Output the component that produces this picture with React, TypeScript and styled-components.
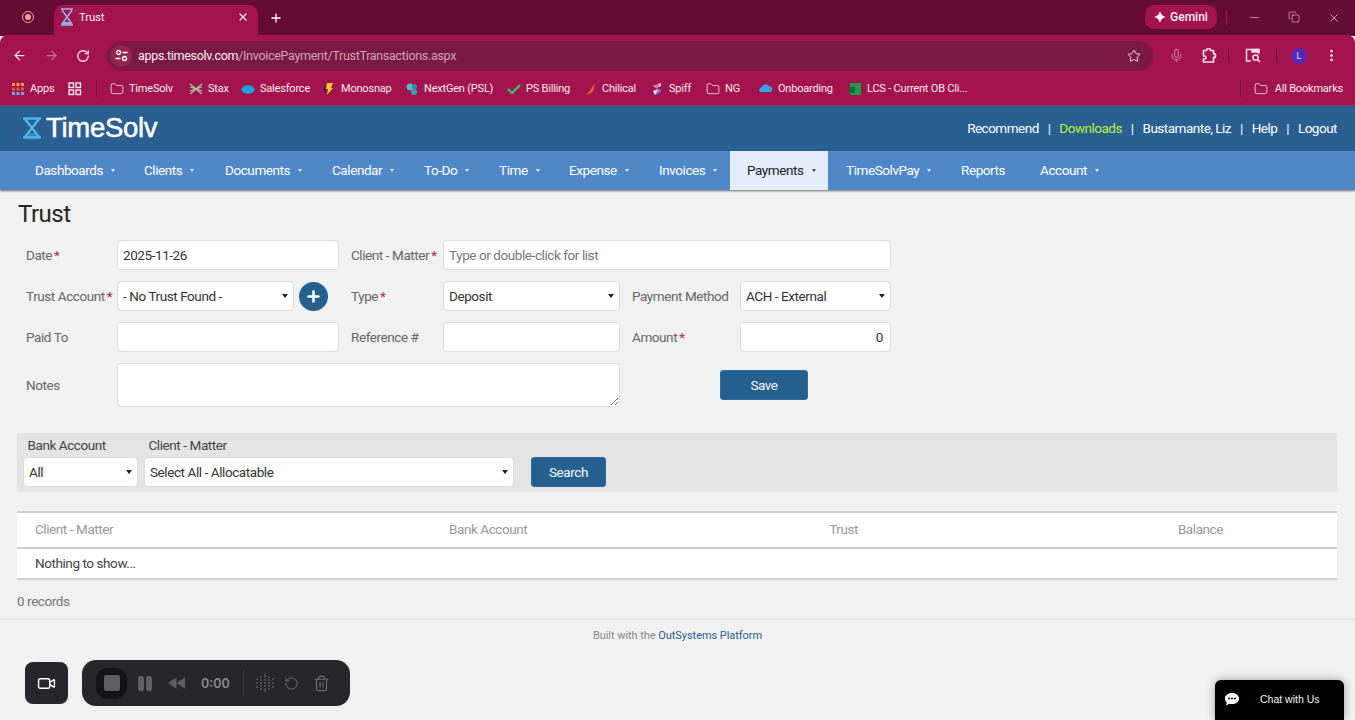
import React from "react";
import styled, { createGlobalStyle } from "styled-components";
import { ArrowLeft, ArrowRight, RotateCw, Star, Mic, X, Plus, Minus, Copy, EllipsisVertical, Folder, Video, RotateCcw, Trash2 } from "lucide-react";

const Global = createGlobalStyle`
  html, body { margin: 0; padding: 0; background: #f1f1f1; }
  * { box-sizing: border-box; }
  body { font-family: Roboto, "Liberation Sans", sans-serif; font-size: 13.5px; letter-spacing: -0.42px; color: #333; overflow: hidden; }
`;

const Page = styled.div`position: relative; width: 1355px; height: 720px; overflow: hidden; display: flex; flex-direction: column;`;

/* Browser chrome */
const TabStrip = styled.div`height: 36px; background: #650c35; display: flex; align-items: flex-end; padding-left: 20px; flex: none; letter-spacing: 0;`;
const RecordDot = styled.div`
  width: 12px; height: 12px; border-radius: 50%; border: 1.5px solid #f3a5a5; margin-bottom: 13px; margin-right: 20px;
  display: flex; align-items: center; justify-content: center; margin-left: 2px;
  &::before { content: ""; width: 6px; height: 6px; border-radius: 50%; background: #f4a0a0; }
`;
const Tab = styled.div`
  width: 204px; height: 31px; background: #a3134d; border-radius: 9px 9px 0 0; display: flex; align-items: center; padding: 0 9px 7px 5px;
  color: #f6e9ee; font-size: 11.5px; letter-spacing: -0.2px;
`;
const TabTitle = styled.span`flex: 1; margin-left: 4px;`;
const NewTab = styled.div`color: #fff; margin: 0 0 11px 11px; display: flex;`;
const StripSpacer = styled.div`flex: 1;`;
const Gemini = styled.div`
  width: 72px; height: 24px; background: #a3134d; border-radius: 9px; margin-bottom: 7px; color: #fbeef3; font-size: 12px;
  display: flex; align-items: center; justify-content: center; gap: 4px; font-weight: 500;
`;
const StripSep = styled.div`width: 1px; height: 14px; background: #a3134d; margin: 0 0 11px 9px;`;
const WinButtons = styled.div`display: flex; margin-bottom: 11px; color: #e6d3db; width: 128px; padding-left: 21px; gap: 27px;`;

const Toolbar = styled.div`height: 37px; background: #a3134d; border-radius: 8px 8px 0 0; display: flex; align-items: center; flex: none; padding: 4px 0 0 12px; margin-top: -1px; color: #f3dfe7; letter-spacing: 0;`;
const NavIcon = styled.div<{ $dim?: boolean }>`width: 32px; display: flex; opacity: ${p => (p.$dim ? 0.45 : 1)};`;
const Omnibox = styled.div`
  width: 1046px; height: 30px; margin-left: -1px; background: #7a1a43; border-radius: 15px; display: flex; align-items: center; padding: 0 12px 0 3px; font-size: 12.5px; letter-spacing: -0.3px;
`;
const SiteInfo = styled.div`width: 22px; height: 22px; border-radius: 50%; background: #92264f; display: flex; align-items: center; justify-content: center; margin-right: 6px;`;
const UrlHost = styled.span`color: #fbeff4;`;
const UrlPath = styled.span`color: #cfa3b6;`;
const OmniSpacer = styled.div`flex: 1;`;
const ToolIcons = styled.div`display: flex; align-items: center; padding-left: 16px; width: 202px;`;
const ToolIcon = styled.div<{ $w: number; $dim?: boolean }>`width: ${p => p.$w}px; display: flex; opacity: ${p => (p.$dim ? 0.45 : 1)};`;
const ToolSep = styled.div<{ $w: number }>`width: 1px; height: 15px; background: #7d1440; margin-right: ${p => p.$w}px;`;
const Avatar = styled.div`width: 16px; height: 16px; border-radius: 50%; background: #5a25b0; color: #e9dcf5; font-size: 9px; display: flex; align-items: center; justify-content: center; margin-right: 17px;`;

const Bookmarks = styled.div`height: 33px; background: #a3134d; display: flex; align-items: center; padding: 0 12px 0 11px; font-size: 11px; letter-spacing: -0.2px; color: #f8ebf0; flex: none;`;
const Bookmark = styled.div<{ $w: number }>`width: ${p => p.$w}px; display: flex; align-items: center; gap: 5px; white-space: nowrap; flex: none;`;
const AllBookmarks = styled(Bookmark)`justify-content: flex-end; gap: 7px;`;
const BmIcon = styled.svg`width: 14px; height: 14px; flex: none;`;
const BmSep = styled.div`width: 1px; height: 16px; background: #7d1440; flex: none;`;
const BmSpacer = styled.div`flex: 1;`;

/* App header */
const AppHeader = styled.header`height: 46px; background: #2a6091; border-top: 1px solid #8f3a6f; display: flex; align-items: center; justify-content: space-between; padding: 0 18px 2px 22px; flex: none;`;
const Logo = styled.div`display: flex; align-items: center; gap: 4px; color: #fff; font-family: "Liberation Sans", Arial, sans-serif; font-size: 27.5px; letter-spacing: -0.3px; font-weight: 400; -webkit-text-stroke: 0.5px #fff;`;
const TopLinks = styled.nav`display: flex; align-items: center; color: #fff; letter-spacing: -0.5px;`;
const TopLink = styled.span<{ $green?: boolean }>`color: ${p => (p.$green ? "#b9f03c" : "#fff")};`;
const TopSep = styled.span`margin: 0 8.9px;`;

const MainNav = styled.nav`height: 39px; background: #4f87c9; box-shadow: 0 1px 2px rgba(0,0,0,.55); display: flex; padding-left: 17px; flex: none; position: relative; color: #fff;`;
const NavItem = styled.div<{ $active?: boolean; $w: number }>`
  width: ${p => p.$w}px; display: flex; align-items: center; padding: 0 0 2px ${p => (p.$active ? 17 : 18)}px; gap: 8px; flex: none;
  background: ${p => (p.$active ? "#e4eefa" : "transparent")}; color: ${p => (p.$active ? "#222" : "#fff")};
`;
const NavCaret = styled.span<{ $dark?: boolean }>`width: 0; height: 0; margin-top: 2px; opacity: .85; border-left: 2.5px solid transparent; border-right: 2.5px solid transparent; border-top: 3px solid ${p => (p.$dark ? "#222" : "#fff")};`;

/* Form */
const Content = styled.main`padding: 10px 18px 0 17px; flex: none;`;
const Title = styled.h1`margin: 0 0 12px 1px; font-size: 24px; font-weight: 400; line-height: 28px; letter-spacing: -0.5px; color: #252525;`;
const FormGrid = styled.div`
  display: grid; width: 874px; margin-left: 9px;
  grid-template-columns: 91px 222px 12px 92px 177px 12px 108px 151px;
  grid-template-rows: 30px 30px 30px 44px; row-gap: 11px; align-items: center;
`;
const Label = styled.label<{ $col: number }>`grid-column: ${p => p.$col}; color: #666; white-space: nowrap;`;
const Req = styled.span`color: #b3262e; margin-left: 2px;`;
const Input = styled.input<{ $span?: number; $right?: boolean }>`
  grid-column: ${p => (p.$span ? `span ${p.$span}` : "auto")}; width: 100%; height: 30px; border: 1px solid #dcdcdc; border-radius: 4px; background: #fff;
  padding: 0 5px; font: inherit; letter-spacing: inherit; color: #333; text-align: ${p => (p.$right ? "right" : "left")}; outline: none;
  &::placeholder { color: #777; opacity: 1; }
  ${p => p.$right && "padding-right: 7px;"}
`;
const Select = styled.div<{ $w?: number }>`
  position: relative; height: 30px; width: ${p => (p.$w ? `${p.$w}px` : "100%")}; flex: none; border: 1px solid #dcdcdc; border-radius: 4px; background: #fff;
  display: flex; align-items: center; padding-left: 5px; color: #333;
  &::after { content: ""; position: absolute; right: 5px; top: 12px; width: 0; height: 0; border-left: 3.5px solid transparent; border-right: 3.5px solid transparent; border-top: 4px solid #222; }
`;
const TrustField = styled.div`display: flex; align-items: center; gap: 5px;`;
const AddCircle = styled.div`width: 29px; height: 29px; border-radius: 50%; background: #25608f; display: flex; align-items: center; justify-content: center; color: #fff;`;
const GapCell = styled.div`grid-column: span 1;`;
const Notes = styled.textarea`grid-column: 2 / span 4; width: 100%; height: 44px; border: 1px solid #dcdcdc; border-radius: 4px; background: #fff; display: block; resize: both; outline: none;`;
const SaveCell = styled.div`grid-column: 7 / span 2; padding-left: 88px;`;
const Button = styled.button<{ $w: number }>`
  width: ${p => p.$w}px; height: 30px; border: 1px solid #2f6da3; border-radius: 3px; background: #25608f; color: #f4f8fb; font: inherit; letter-spacing: inherit; padding: 0; display: block;
`;

const Filter = styled.section`margin-top: 26px; height: 59px; background: #e4e4e4; border-radius: 2px; padding: 5px 6px; display: flex; align-items: flex-end; gap: 6px;`;
const FilterField = styled.div<{ $w: number }>`width: ${p => p.$w}px; display: flex; flex-direction: column; height: 49px; justify-content: space-between; color: #444;`;
const FilterLabel = styled.span`padding-left: 4.5px; line-height: 14px;`;
const SearchBtn = styled(Button)`margin-left: 11px;`;

const Table = styled.section`margin-top: 19px; background: #fff; border-top: 2px solid #cfcfcf; border-bottom: 2px solid #cfcfcf;`;
const HeadRow = styled.div`display: grid; grid-template-columns: 414px 251px 158px 365px; padding: 0 0 3px 18px; height: 36px; align-items: center; color: #999; border-bottom: 2px solid #cfcfcf;`;
const HeadCell = styled.div<{ $right?: boolean }>`text-align: ${p => (p.$right ? "right" : "left")};`;
const EmptyRow = styled.div`height: 29px; padding: 0 0 2px 18px; display: flex; align-items: center; color: #444;`;
const Records = styled.div`margin-top: 13px; color: #777; height: 15px; line-height: 16px;`;

const Footer = styled.footer`margin-top: 10px; border-top: 2px solid #e3e3e3; padding-top: 9px; text-align: center; font-size: 11px; letter-spacing: -0.05px; color: #888; flex: none;`;
const FooterLink = styled.span`color: #2a6091;`;

/* Overlays */
const CamBtn = styled.div`position: absolute; left: 25px; top: 662px; width: 43px; height: 42px; border-radius: 8px; background: #26262b; color: #fff; display: flex; align-items: center; justify-content: center;`;
const RecBar = styled.div`position: absolute; left: 82px; top: 660px; width: 268px; height: 46px; border-radius: 14px; background: #26262b; display: flex; align-items: center; padding-left: 14px; color: #6e6e73;`;
const StopWrap = styled.div`width: 31px; height: 31px; border-radius: 12px; background: #141418; display: flex; align-items: center; justify-content: center; margin-right: 11px;`;
const StopSq = styled.div`width: 16px; height: 16px; border-radius: 2px; background: #5f5f63;`;
const PauseIcon = styled.div`display: flex; gap: 2px; margin-right: 16px; &::before, &::after { content: ""; width: 6px; height: 15px; border-radius: 2px; background: #5f5f63; }`;
const Timer = styled.span`color: #8a8a8e; font-family: Inter, sans-serif; font-weight: 600; font-size: 12.5px; letter-spacing: 0; width: 28px; margin: 0 14px 0 16px; white-space: nowrap;`;
const BarSep = styled.div`width: 1px; height: 26px; background: #3a3a40; margin-right: 12px;`;
const BarIcon = styled.div<{ $w: number }>`width: ${p => p.$w}px; display: flex;`;
const Chat = styled.div`position: absolute; left: 1215px; top: 680px; width: 129px; height: 40px; background: #000; border-radius: 6px 6px 0 0; box-shadow: 0 0 8px rgba(0,0,0,.35); color: #f4f4f4; display: flex; align-items: center; padding: 0 0 2px 10px; font-family: "Liberation Sans", Arial, sans-serif; font-size: 10.5px; letter-spacing: 0;`;
const ChatText = styled.span`margin-left: 21px;`;

const FolderIcon = () => <Folder size={14} strokeWidth={1.4} color="#f6e6ec" />;

const bookmarks: { w: number; label: string; icon: React.ReactNode }[] = [
  { w: 79, label: "TimeSolv", icon: <FolderIcon /> },
  { w: 52, label: "Stax", icon: <BmIcon viewBox="0 0 14 14"><path d="M1 2l6 5 6-5M1 12l6-5 6 5M1 5l12 4M1 9l12-4" stroke="#a7c9a0" strokeWidth="1.3" fill="none" /></BmIcon> },
  { w: 81, label: "Salesforce", icon: <BmIcon viewBox="0 0 14 14"><ellipse cx="7" cy="7.500" rx="6.500" ry="4.200" fill="#19a1e0" /></BmIcon> },
  { w: 83, label: "Monosnap", icon: <BmIcon viewBox="0 0 14 14"><path d="M5 1h6L9 6h2l-6 7 1-6H4z" fill="#f3c91f" /><path d="M3 3L2 8l2 3z" fill="#1c1c3a" /></BmIcon> },
  { w: 102, label: "NextGen (PSL)", icon: <BmIcon viewBox="0 0 14 14"><circle cx="5" cy="5" r="3.400" fill="#5bb3c9" /><circle cx="9.500" cy="4.500" r="2.600" fill="#2f8fae" /><circle cx="9" cy="10" r="3" fill="#3f9fb8" /></BmIcon> },
  { w: 76, label: "PS Billing", icon: <BmIcon viewBox="0 0 14 14"><path d="M1 7l4 4 8-8" stroke="#3bbf6a" strokeWidth="2.400" fill="none" /></BmIcon> },
  { w: 67, label: "Chilical", icon: <BmIcon viewBox="0 0 14 14"><path d="M2 13C6 11 8 7 11 2c1 4-1 9-5 10z" fill="#ef5a24" /></BmIcon> },
  { w: 56, label: "Spiff", icon: <BmIcon viewBox="0 0 14 14"><path d="M11 1L3 4l5 3-5 2 2 4 6-4-5-3 5-2z" fill="#e7e3ff" /><path d="M11 1L3 4l4 2z" fill="#f2708f" /><path d="M5 13l6-4-3-2z" fill="#5f8df0" /></BmIcon> },
  { w: 53, label: "NG", icon: <FolderIcon /> },
  { w: 89, label: "Onboarding", icon: <BmIcon viewBox="0 0 14 14"><path d="M1 10a3 3 0 012-5 4 4 0 017-1 3.400 3.400 0 012 6z" fill="#3aa0ea" /></BmIcon> },
  { w: 130, label: "LCS - Current OB Cli...", icon: <BmIcon viewBox="0 0 14 14"><rect x="2" y="1" width="11" height="12" rx="1" fill="#1f9a4f" /><rect x="1" y="5" width="6" height="6" fill="#0f6b37" /></BmIcon> },
];

const navItems: { label: string; w: number; caret?: boolean; active?: boolean }[] = [
  { label: "Dashboards", w: 109, caret: true },
  { label: "Clients", w: 81, caret: true },
  { label: "Documents", w: 107, caret: true },
  { label: "Calendar", w: 92, caret: true },
  { label: "To-Do", w: 75, caret: true },
  { label: "Time", w: 70, caret: true },
  { label: "Expense", w: 90, caret: true },
  { label: "Invoices", w: 89, caret: true },
  { label: "Payments", w: 98, caret: true, active: true },
  { label: "TimeSolvPay", w: 115, caret: true },
  { label: "Reports", w: 79 },
  { label: "Account", w: 90, caret: true },
];

const Hourglass = () => (
  <svg width="20" height="22" viewBox="0 0 20 22" fill="none" stroke="#4fb4ea" strokeWidth="2.400">
    <path d="M1 1.500h18M1 20.500h18M3 2l14 18M17 2L3 20" />
    <path d="M6.500 16h7l2.500 4H4z" fill="#4fb4ea" fillOpacity="0.45" stroke="none" />
  </svg>
);

export default function App() {
  return (
    <Page>
      <Global />
      <TabStrip>
        <RecordDot />
        <Tab>
          <svg width="16" height="18" viewBox="0 0 16 18" fill="none" stroke="#8fb6e6" strokeWidth="1.500"><path d="M2 1h12M2 17h12M3 2l10 14M13 2L3 16" /><path d="M5 14h6l1.500 2.500h-9z" fill="#8fb6e6" stroke="none" /></svg>
          <TabTitle>Trust</TabTitle>
          <X size={12} strokeWidth={2.600} color="#f6e9ee" />
        </Tab>
        <NewTab><Plus size={14} strokeWidth={2.200} /></NewTab>
        <StripSpacer />
        <Gemini>
          <svg width="12" height="12" viewBox="0 0 12 12"><path d="M6 0c.6 3.400 2.600 5.400 6 6-3.400.6-5.400 2.600-6 6-.6-3.400-2.600-5.400-6-6 3.400-.6 5.400-2.600 6-6z" fill="#fff" /></svg>
          Gemini
        </Gemini>
        <StripSep />
        <WinButtons>
          <Minus size={13} strokeWidth={1.200} />
          <Copy size={12} strokeWidth={1.200} />
          <X size={14} strokeWidth={1.200} />
        </WinButtons>
      </TabStrip>
      <Toolbar>
        <NavIcon><ArrowLeft size={15} strokeWidth={2} /></NavIcon>
        <NavIcon $dim><ArrowRight size={15} strokeWidth={2} /></NavIcon>
        <NavIcon><RotateCw size={14} strokeWidth={2.200} /></NavIcon>
        <Omnibox>
          <SiteInfo>
            <svg width="13" height="13" viewBox="0 0 13 13" fill="none" stroke="#fff" strokeWidth="1.300"><circle cx="3.500" cy="3.500" r="2" /><path d="M7.500 3.500h5M.5 9.500h5" /><circle cx="9.500" cy="9.500" r="2" /></svg>
          </SiteInfo>
          <UrlHost>apps.timesolv.com</UrlHost><UrlPath>/InvoicePayment/TrustTransactions.aspx</UrlPath>
          <OmniSpacer />
          <Star size={14} strokeWidth={1.700} />
        </Omnibox>
        <ToolIcons>
          <ToolIcon $w={32} $dim><Mic size={15} strokeWidth={2} /></ToolIcon>
          <ToolIcon $w={27}>
            <svg width="16" height="16" viewBox="0 0 16 16" fill="none" stroke="#f3dfe7" strokeWidth="1.700" strokeLinejoin="round"><path d="M2.500 2.500h3a2 2 0 014 0h3v3.200a2 2 0 010 4v4.300h-10v-3h1a1.500 1.500 0 000-3h-1z" /></svg>
          </ToolIcon>
          <ToolSep $w={16} />
          <ToolIcon $w={31}>
            <svg width="16" height="15" viewBox="0 0 16 15" fill="none" stroke="#f3dfe7" strokeWidth="1.500"><path d="M6 13H1.500V1.500h12V6" /><path d="M7 1.500h7V4H7z" fill="#f3dfe7" /><circle cx="10.500" cy="9.500" r="2.600" /><path d="M12.500 11.500L15 14" /></svg>
          </ToolIcon>
          <ToolSep $w={14} />
          <Avatar>L</Avatar>
          <EllipsisVertical size={15} strokeWidth={2.400} />
        </ToolIcons>
      </Toolbar>
      <Bookmarks>
        <Bookmark $w={57}>
          <BmIcon viewBox="0 0 14 14"><path d="M1 1h3v3H1zM5.500 1h3v3h-3zM10 1h3v3h-3z" fill="#f0a030" /><path d="M1 5.500h3v3H1zM5.500 5.500h3v3h-3zM10 5.500h3v3h-3z" fill="#e0554a" /><path d="M1 10h3v3H1zM5.500 10h3v3h-3zM10 10h3v3h-3z" fill="#6aa8e8" /></BmIcon>
          Apps
        </Bookmark>
        <Bookmark $w={28}>
          <BmIcon viewBox="0 0 14 14" fill="none" stroke="#f6e6ec" strokeWidth="1.400"><rect x="1" y="1" width="4.500" height="4.500" /><rect x="8" y="1" width="4.500" height="4.500" /><rect x="1" y="8" width="4.500" height="4.500" /><rect x="8" y="8" width="4.500" height="4.500" /></BmIcon>
        </Bookmark>
        <BmSep />
        <Bookmark $w={13} />
        {bookmarks.map(b => (
          <Bookmark key={b.label} $w={b.w}>{b.icon}{b.label}</Bookmark>
        ))}
        <BmSpacer />
        <BmSep />
        <AllBookmarks $w={102}><FolderIcon />All Bookmarks</AllBookmarks>
      </Bookmarks>

      <AppHeader>
        <Logo><Hourglass />TimeSolv</Logo>
        <TopLinks>
          <TopLink>Recommend</TopLink><TopSep>|</TopSep>
          <TopLink $green>Downloads</TopLink><TopSep>|</TopSep>
          <TopLink>Bustamante, Liz</TopLink><TopSep>|</TopSep>
          <TopLink>Help</TopLink><TopSep>|</TopSep>
          <TopLink>Logout</TopLink>
        </TopLinks>
      </AppHeader>
      <MainNav>
        {navItems.map(n => (
          <NavItem key={n.label} $w={n.w} $active={n.active}>
            {n.label}{n.caret && <NavCaret $dark={n.active} />}
          </NavItem>
        ))}
      </MainNav>

      <Content>
        <Title>Trust</Title>
        <FormGrid>
          <Label $col={1}>Date<Req>*</Req></Label>
          <Input defaultValue="2025-11-26" />
          <GapCell />
          <Label $col={4}>Client - Matter<Req>*</Req></Label>
          <Input $span={4} placeholder="Type or double-click for list" />

          <Label $col={1}>Trust Account<Req>*</Req></Label>
          <TrustField>
            <Select $w={177}>- No Trust Found -</Select>
            <AddCircle><Plus size={17} strokeWidth={3.600} /></AddCircle>
          </TrustField>
          <GapCell />
          <Label $col={4}>Type<Req>*</Req></Label>
          <Select>Deposit</Select>
          <GapCell />
          <Label $col={7}>Payment Method</Label>
          <Select>ACH - External</Select>

          <Label $col={1}>Paid To</Label>
          <Input />
          <GapCell />
          <Label $col={4}>Reference #</Label>
          <Input />
          <GapCell />
          <Label $col={7}>Amount<Req>*</Req></Label>
          <Input $right defaultValue="0" />

          <Label $col={1}>Notes</Label>
          <Notes />
          <GapCell />
          <SaveCell><Button $w={88}>Save</Button></SaveCell>
        </FormGrid>

        <Filter>
          <FilterField $w={115}>
            <FilterLabel>Bank Account</FilterLabel>
            <Select>All</Select>
          </FilterField>
          <FilterField $w={370}>
            <FilterLabel>Client - Matter</FilterLabel>
            <Select>Select All - Allocatable</Select>
          </FilterField>
          <SearchBtn $w={75}>Search</SearchBtn>
        </Filter>

        <Table>
          <HeadRow>
            <HeadCell>Client - Matter</HeadCell>
            <HeadCell>Bank Account</HeadCell>
            <HeadCell $right>Trust</HeadCell>
            <HeadCell $right>Balance</HeadCell>
          </HeadRow>
          <EmptyRow>Nothing to show...</EmptyRow>
        </Table>
        <Records>0 records</Records>
      </Content>
      <Footer>Built with the <FooterLink>OutSystems Platform</FooterLink></Footer>

      <CamBtn><Video size={19} strokeWidth={1.800} /></CamBtn>
      <RecBar>
        <StopWrap><StopSq /></StopWrap>
        <PauseIcon />
        <svg width="17" height="12" viewBox="0 0 18 12" fill="#5f5f63"><path d="M9 0v12L0 6zM18 0v12L9 6z" /></svg>
        <Timer>0:00</Timer>
        <BarSep />
        <BarIcon $w={28}>
          <svg width="18" height="18" viewBox="0 0 18 18" fill="#5f5f63">
            {[[9, 1], [5, 3], [9, 3], [13, 3], [1, 5], [5, 6], [9, 6], [13, 6], [17, 5], [1, 9], [5, 9], [9, 9], [13, 9], [17, 9], [1, 13], [5, 12], [9, 12], [13, 12], [17, 13], [5, 15], [9, 15], [13, 15], [9, 17]].map(([x, y]) => <circle key={`${x}-${y}`} cx={x} cy={y} r="0.900" />)}
          </svg>
        </BarIcon>
        <BarIcon $w={29}><RotateCcw size={15} strokeWidth={1.600} /></BarIcon>
        <BarIcon $w={18}><Trash2 size={17} strokeWidth={1.600} /></BarIcon>
      </RecBar>
      <Chat>
        <svg width="14" height="13" viewBox="0 0 14 13"><path d="M7 0C3 0 0 2.400 0 5.500c0 1.500.7 2.800 1.800 3.800L1 12.500l3.500-1.700c.8.200 1.600.3 2.500.3 4 0 7-2.500 7-5.600S11 0 7 0z" fill="#fff" /><circle cx="4" cy="5.600" r="1" fill="#000" /><circle cx="7" cy="5.600" r="1" fill="#000" /><circle cx="10" cy="5.600" r="1" fill="#000" /></svg>
        <ChatText>Chat with Us</ChatText>
      </Chat>
    </Page>
  );
}
